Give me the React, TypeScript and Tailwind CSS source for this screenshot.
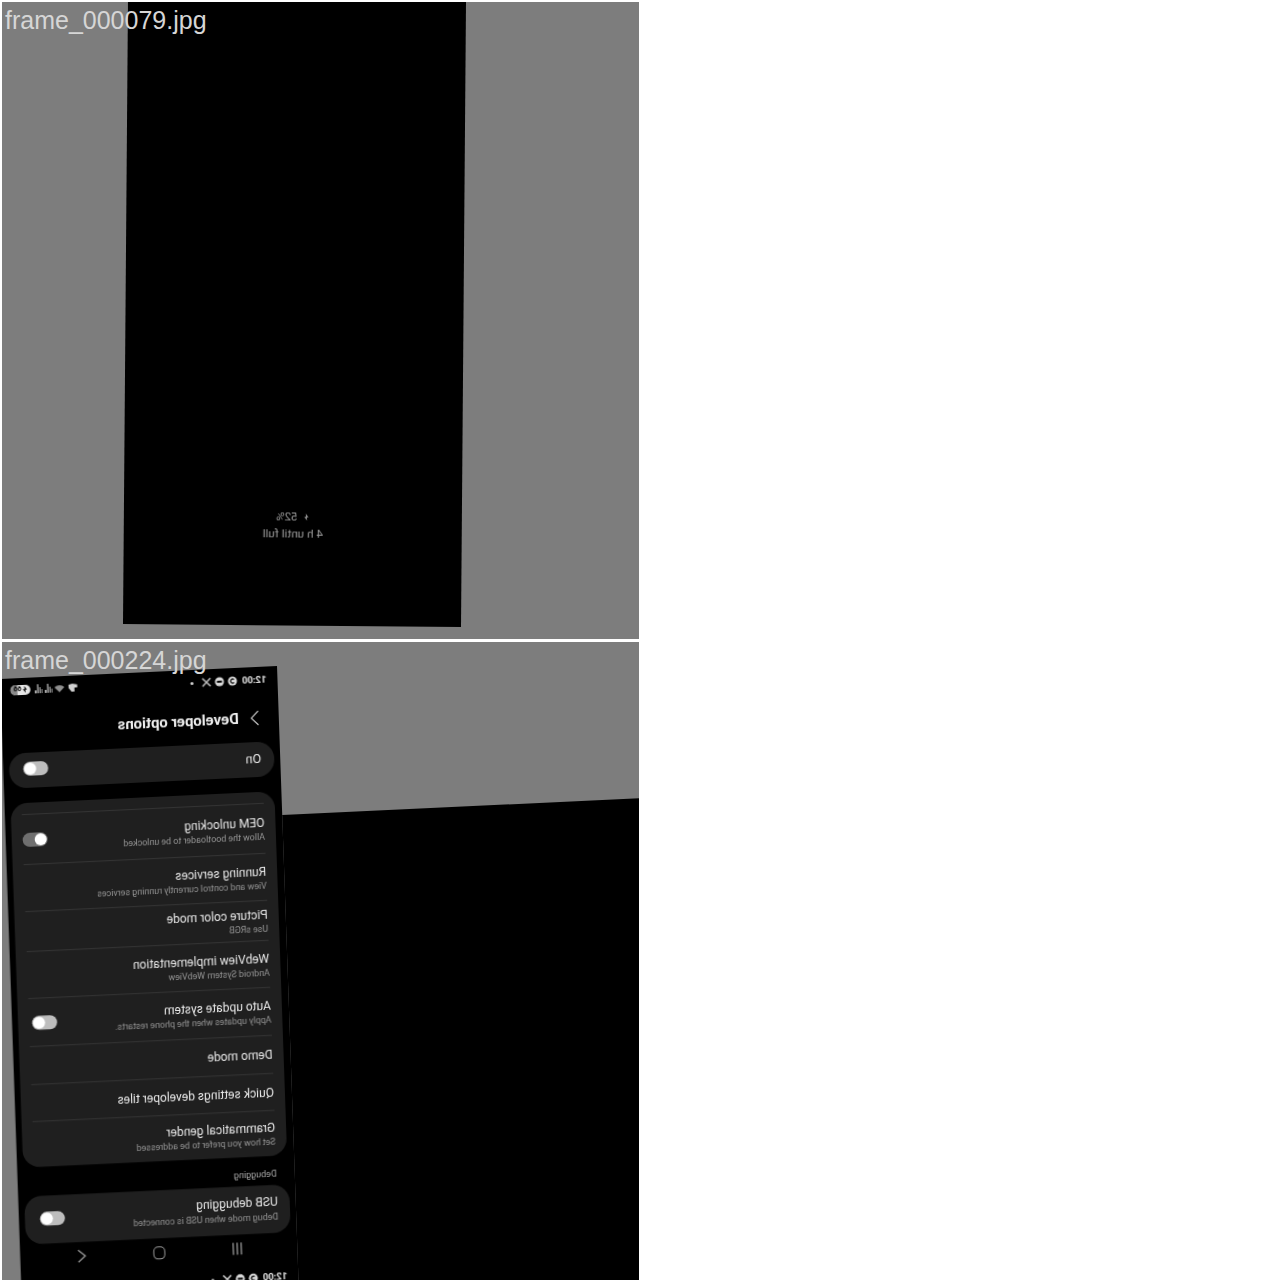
import React from 'react';

type ToggleProps = {
  state: 'off' | 'dim';
  className?: string;
};

type RowProps = {
  title?: string;
  sub?: string;
  toggle?: 'off' | 'dim';
  toggleClass?: string;
  height: string;
  last?: boolean;
};

const Toggle = ({ state, className }: ToggleProps) => (
  <div
    className={`flex h-[14px] w-[25px] shrink-0 items-center rounded-full px-[1px] ${
      state === 'dim' ? 'justify-start bg-[#6f6f6f]' : 'justify-end bg-[#bdbdbd]'
    } ${className ?? ''}`}
  >
    <div className="h-[12px] w-[12px] rounded-full bg-white" />
  </div>
);

const Row = ({ title, sub, toggle, toggleClass, height, last }: RowProps) => (
  <div className={`px-[11px] ${height}`}>
    <div className={`flex h-full items-center justify-between ${last ? '' : 'border-b border-[#363636]'}`}>
      <div className="flex flex-col pt-[2px]">
        {title && <div className="text-[12px] leading-[15px] text-[#e8e8e8]">{title}</div>}
        {sub && <div className="mt-[1px] text-[8.9px] leading-[11px] text-[#969696]">{sub}</div>}
      </div>
      {toggle && <Toggle state={toggle} className={toggleClass} />}
    </div>
  </div>
);

const Bars = () => (
  <svg width="8" height="9" viewBox="0 0 8 9" fill="#c8c8c8">
    <rect x="0" y="5" width="1" height="4" />
    <rect x="2" y="3" width="1" height="6" />
    <rect x="4" y="0" width="1.2" height="9" />
    <rect x="6" y="6" width="1.6" height="3" />
  </svg>
);

const Bolt = ({ fill, size }: { fill: string; size: number }) => (
  <svg width={size} height={size} viewBox="0 0 10 10" fill={fill}>
    <path d="M6 0 L2 5.5 L4.5 5.5 L4 10 L8 4.5 L5.5 4.5 Z" />
  </svg>
);

const StatusBar = () => (
  <div className="flex h-[26px] shrink-0 items-center justify-between pl-[11px] pr-[10px]">
    <div className="flex items-center gap-[3px]">
      <span className="mr-[2px] text-[9.5px] font-bold text-[#e6e6e6]">12:00</span>
      <svg width="10" height="10" viewBox="0 0 10 10">
        <circle cx="5" cy="5" r="4.5" fill="#d8d8d8" />
        <path d="M3.5 3.5 A2 2 0 1 1 3.5 6.5" stroke="#000" strokeWidth="1.2" fill="none" />
      </svg>
      <svg width="10" height="10" viewBox="0 0 10 10">
        <circle cx="5" cy="5" r="4.5" fill="#d8d8d8" />
        <rect x="2.5" y="4" width="5" height="2" fill="#000" />
      </svg>
      <svg width="10" height="10" viewBox="0 0 10 10" stroke="#bcbcbc" strokeWidth="1.6">
        <path d="M1 1 L9 9 M9 1 L1 9" />
      </svg>
      <div className="ml-[5px] h-[3px] w-[3px] rounded-full bg-[#d0d0d0]" />
    </div>
    <div className="mb-[3px] flex items-center gap-[2px]">
      <svg width="9" height="8" viewBox="0 0 9 8" fill="#d0d0d0">
        <path d="M0 1 L5 0 L9 1 L9 4 L6 8 L3 8 L3 4 L0 4 Z" />
      </svg>
      <svg width="10" height="8" viewBox="0 0 10 8" className="ml-[2px]" fill="#8f8f8f">
        <path d="M0 3 A7 7 0 0 1 10 3 L5 8 Z" />
      </svg>
      <Bars />
      <Bars />
      <div className="relative ml-[2px] flex h-[10px] w-[20px] items-center overflow-hidden rounded-full bg-[#e6e6e6] pl-[2px]">
        <div className="absolute right-0 top-0 h-full w-[7px] bg-[#8a8a8a]" />
        <Bolt fill="#000" size={7} />
        <span className="relative text-[7px] font-bold leading-none text-black">66</span>
      </div>
    </div>
  </div>
);

const PhoneScreen = () => (
  <div className="flex h-[700px] w-[277px] -scale-x-100 flex-col bg-black font-['Roboto',sans-serif] blur-[0.4px]">
    <StatusBar />

    <div className="flex h-[49px] shrink-0 items-center gap-[11px] pl-[19px] pt-[1px]">
      <svg width="10" height="16" viewBox="0 0 10 16" fill="none" stroke="#bdbdbd" strokeWidth="1.2">
        <path d="M1.5 1 L8.5 8 L1.5 15" />
      </svg>
      <span className="text-[14.9px] font-bold text-[#efefef]">Developer options</span>
    </div>

    <div className="mx-[6px] flex h-[35px] shrink-0 items-center justify-between rounded-[17px] bg-[#1f1f1f] pl-[13px] pr-[14px]">
      <span className="text-[12.5px] text-[#e8e8e8]">On</span>
      <Toggle state="off" className="mb-[3px]" />
    </div>

    <div className="ml-[7px] mr-[6px] mt-[15px] flex h-[364px] shrink-0 flex-col overflow-hidden rounded-[17px] bg-[#1f1f1f]">
      <Row height="h-[12px]" />
      <Row height="h-[50px]" title="OEM unlocking" sub="Allow the bootloader to be unlocked" toggle="dim" />
      <Row height="h-[47px]" title="Running services" sub="View and control currently running services" />
      <Row height="h-[40px]" title="Picture color mode" sub="Use sRGB" />
      <Row height="h-[47px]" title="WebView implementation" sub="Android System WebView" />
      <Row
        height="h-[48px]"
        title="Auto update system"
        sub="Apply updates when the phone restarts."
        toggle="off"
        toggleClass="mr-[3px]"
      />
      <Row height="h-[38px]" title="Demo mode" />
      <Row height="h-[37px]" title="Quick settings developer tiles" />
      <Row height="h-[45px]" title="Grammatical gender" sub="Set how you prefer to be addressed" last />
    </div>

    <div className="flex h-[29px] shrink-0 items-end pb-[6px] pl-[18px] text-[9px] leading-[10px] text-[#a8a8a8]">
      Debugging
    </div>

    <div className="mx-[6px] flex h-[48px] shrink-0 items-center justify-between rounded-[17px] bg-[#1f1f1f] pl-[12px] pr-[15px]">
      <div>
        <div className="text-[12px] leading-[15px] text-[#e8e8e8]">USB debugging</div>
        <div className="mt-[2px] text-[8.9px] leading-[11px] text-[#969696]">Debug mode when USB is connected</div>
      </div>
      <Toggle state="off" className="mb-[2px]" />
    </div>

    <div className="flex h-[28px] shrink-0 items-center justify-between pl-[50px] pr-[52px]">
      <svg width="20" height="14" viewBox="0 0 20 14" stroke="#9a9a9a" strokeWidth="1.3">
        <path d="M6 1 V13 M10 1 V13 M14 1 V13" />
      </svg>
      <div className="h-[13px] w-[12px] rounded-[5px] border-[1.5px] border-[#9a9a9a]" />
      <svg width="20" height="14" viewBox="0 0 20 14" fill="none" stroke="#9a9a9a" strokeWidth="1.3">
        <path d="M14 1 L7 7 L14 13" />
      </svg>
    </div>

    <div className="mt-[3px]">
      <StatusBar />
    </div>
  </div>
);

const FrameLabel = ({ name }: { name: string }) => (
  <div className="absolute left-[3px] top-[4px] font-['Liberation_Sans',sans-serif] text-[25px] leading-[29px] text-[#d6d6d6]">
    {name}
  </div>
);

export default function App() {
  return (
    <div className="flex h-[1280px] w-[1280px] flex-col gap-[3px] overflow-hidden bg-white pl-[2px] pt-[2px]">
      <div className="relative h-[637px] w-[637px] shrink-0 overflow-hidden bg-[#7d7d7d]">
        <div className="absolute bottom-[15px] left-[121px] h-[660px] w-[338px] origin-bottom-left bg-black [transform:matrix(1,0.0089,-0.008,1,0,0)]">
          <div className="absolute bottom-[83px] left-0 flex w-full -scale-x-100 flex-col items-center font-['Roboto',sans-serif] text-[11.7px] leading-[17px] text-[#9c9c9c] blur-[0.3px]">
            <span className="flex items-center gap-[5px]">
              <Bolt fill="#9c9c9c" size={7} />
              52%
            </span>
            <span>4 h until full</span>
          </div>
        </div>
        <FrameLabel name="frame_000079.jpg" />
      </div>

      <div className="relative h-[638px] w-[637px] shrink-0 overflow-hidden bg-[#7d7d7d]">
        <div className="absolute left-[-2px] top-[24px] w-[277px] origin-top-right [transform:matrix(1,-0.047,0.035,1,0,0)]">
          <div className="absolute left-[277px] top-[149px] h-[800px] w-[500px] bg-black" />
          <PhoneScreen />
        </div>
        <FrameLabel name="frame_000224.jpg" />
      </div>
    </div>
  );
}
